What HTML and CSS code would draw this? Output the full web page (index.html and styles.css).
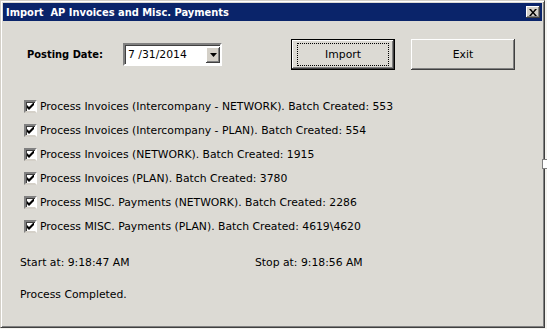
FILE: index.html
```html
<!DOCTYPE html>
<html lang="en">
<head>
    <meta charset="UTF-8">
    <title>Import AP Invoices and Misc. Payments</title>
    <link rel="stylesheet" href="styles.css">
</head>
<body>
    <div class="window">
        <div class="titlebar">
            <span class="title">Import&nbsp; AP Invoices and Misc. Payments</span>
            <span class="close">
                <svg width="8" height="7" viewBox="0 0 8 7"><path d="M0 0h2l2 2.5L6 0h2L5 3.5 8 7H6L4 4.5 2 7H0l3-3.5z" fill="#000"/></svg>
            </span>
        </div>

        <div class="content">
            <div class="toprow">
                <label class="postlabel">Posting Date:</label>
                <div class="combo">
                    <span class="combotext">7 /31/2014</span>
                    <span class="dropbtn">
                        <svg width="7" height="4" viewBox="0 0 7 4"><path d="M0 0h7L3.5 4z" fill="#000"/></svg>
                    </span>
                </div>
                <button class="btn default"><span class="focus">Import</span></button>
                <button class="btn">Exit</button>
            </div>

            <ul class="checks">
                <li><span class="box"><svg width="7" height="7" viewBox="0 0 7 7"><path d="M0 2v3l2 2 5-5V-1L2 4z" fill="#000"/></svg></span>Process Invoices (Intercompany - NETWORK). Batch Created: 553</li>
                <li><span class="box"><svg width="7" height="7" viewBox="0 0 7 7"><path d="M0 2v3l2 2 5-5V-1L2 4z" fill="#000"/></svg></span>Process Invoices (Intercompany - PLAN). Batch Created: 554</li>
                <li><span class="box"><svg width="7" height="7" viewBox="0 0 7 7"><path d="M0 2v3l2 2 5-5V-1L2 4z" fill="#000"/></svg></span>Process Invoices (NETWORK). Batch Created: 1915</li>
                <li><span class="box"><svg width="7" height="7" viewBox="0 0 7 7"><path d="M0 2v3l2 2 5-5V-1L2 4z" fill="#000"/></svg></span>Process Invoices (PLAN). Batch Created: 3780</li>
                <li><span class="box"><svg width="7" height="7" viewBox="0 0 7 7"><path d="M0 2v3l2 2 5-5V-1L2 4z" fill="#000"/></svg></span>Process MISC. Payments (NETWORK). Batch Created: 2286</li>
                <li><span class="box"><svg width="7" height="7" viewBox="0 0 7 7"><path d="M0 2v3l2 2 5-5V-1L2 4z" fill="#000"/></svg></span>Process MISC. Payments (PLAN). Batch Created: 4619\4620</li>
            </ul>

            <div class="times">
                <span class="start">Start at: 9:18:47 AM</span>
                <span>Stop at: 9:18:56 AM</span>
            </div>
            <div class="status">Process Completed.</div>
        </div>
        <span class="grip"></span>
    </div>
</body>
</html>
```

FILE: styles.css
```css
body {
    margin: 0;
    background: #f4f3ef;
    font-family: "DejaVu Sans", sans-serif;
    font-size: 10.8px;
    color: #000;
}
.window {
    position: relative;
    width: 539px;
    height: 322px;
    background: #dcdad4;
    border-top: 1px solid #d4d0c8;
    border-left: 1px solid #d4d0c8;
    border-right: 1px solid #404040;
    border-bottom: 1px solid #404040;
    box-shadow: inset 1px 1px 0 #ffffff, inset -1px -1px 0 #808080;
    padding: 2px;
}
.titlebar {
    height: 18px;
    background: #0a246a;
    color: #fff;
    display: flex;
    align-items: center;
    justify-content: space-between;
    padding: 0 2px 0 3px;
}
.title {
    font-family: "DejaVu Sans Condensed", "DejaVu Sans", sans-serif;
    font-weight: bold;
    font-size: 11px;
}
.close {
    width: 14px;
    height: 12px;
    background: #d4d0c8;
    box-shadow: inset -1px -1px 0 #404040, inset 1px 1px 0 #fff, inset -2px -2px 0 #808080;
    display: flex;
    align-items: center;
    justify-content: center;
}
.content {
    padding: 0 0 0 14px;
}
.toprow {
    display: flex;
    align-items: center;
    height: 33px;
    margin-top: 17px;
}
.postlabel {
    font-family: "DejaVu Sans Condensed", "DejaVu Sans", sans-serif;
    font-size: 11px;
    font-weight: bold;
    margin-left: 10px;
    width: 96px;
}
.combo {
    width: 95px;
    height: 19px;
    background: #fff;
    border-top: 2px solid #808080;
    border-left: 2px solid #808080;
    border-right: 2px solid #fff;
    border-bottom: 2px solid #fff;
    box-shadow: inset 1px 1px 0 #404040;
    display: flex;
    align-items: center;
    justify-content: space-between;
}
.combotext {
    padding-left: 3px;
}
.dropbtn {
    width: 14px;
    height: 16px;
    margin-top: 1px;
    background: #d4d0c8;
    box-shadow: inset -1px -1px 0 #404040, inset 1px 1px 0 #fff, inset -2px -2px 0 #808080;
    display: flex;
    align-items: center;
    justify-content: center;
}
.btn {
    width: 104px;
    height: 31px;
    font-family: inherit;
    font-size: 10.8px;
    background: #dcdad4;
    border: none;
    box-shadow: inset -1px -1px 0 #404040, inset 1px 1px 0 #fff, inset -2px -2px 0 #808080;
    padding: 0;
    margin-left: 16px;
}
.btn.default {
    margin-left: 69px;
    border: 1px solid #000;
    display: flex;
    align-items: center;
    justify-content: center;
}
.focus {
    display: flex;
    align-items: center;
    justify-content: center;
    width: 90px;
    height: 21px;
    border: 1px dotted #000;
}
.checks {
    list-style: none;
    margin: 23px 0 0 0;
    padding: 0 0 0 7px;
}
.checks li {
    display: flex;
    align-items: center;
    height: 24px;
}
.box {
    width: 9px;
    height: 9px;
    margin-right: 3px;
    background: #fff;
    border-top: 2px solid #808080;
    border-left: 2px solid #808080;
    border-right: 2px solid #fff;
    border-bottom: 2px solid #d4d0c8;
    box-shadow: inset 1px 1px 0 #404040;
    display: flex;
    align-items: center;
    justify-content: center;
}
.times {
    display: flex;
    margin-top: 18px;
    padding-left: 3px;
}
.start {
    width: 235px;
}
.status {
    margin-top: 19px;
    padding-left: 3px;
}
.grip {
    position: absolute;
    right: -4px;
    top: 158px;
    width: 4px;
    height: 8px;
    background: #fff;
    border: 1px solid #808080;
}
```
